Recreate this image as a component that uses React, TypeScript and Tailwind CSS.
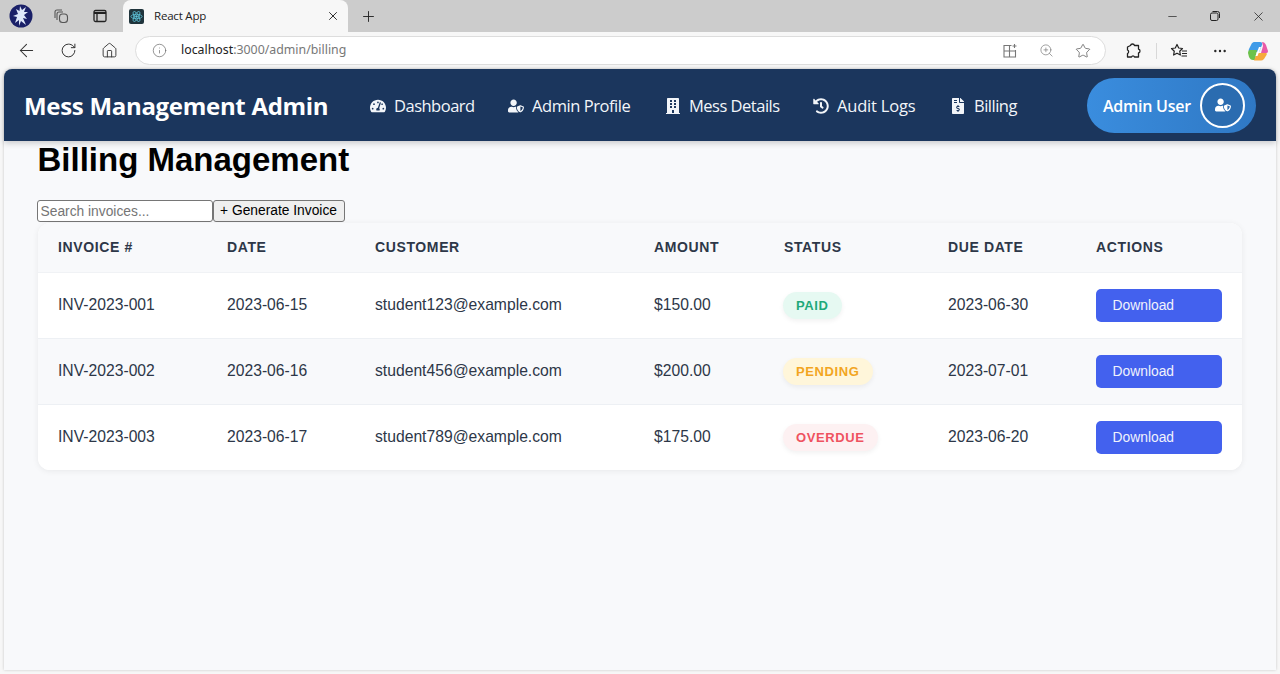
import React from "react";
import { FaTachometerAlt, FaUserShield, FaBuilding, FaHistory, FaFileInvoiceDollar } from "react-icons/fa";
import { ArrowLeft, RotateCw, Home, Info, Plus, X, Minus, ZoomIn, Star, MoreHorizontal } from "lucide-react";

const NAV = [
  { label: "Dashboard", icon: FaTachometerAlt, w: "w-[105px]", mr: "mr-[33px]", t: "tracking-[-0.5px]" },
  { label: "Admin Profile", icon: FaUserShield, w: "w-[125px]", mr: "mr-[32px]", t: "tracking-[-0.45px]" },
  { label: "Mess Details", icon: FaBuilding, w: "w-[116px]", mr: "mr-[32px]", t: "tracking-[-0.5px]" },
  { label: "Audit Logs", icon: FaHistory, w: "w-[104px]", mr: "mr-[33px]", t: "tracking-[-0.2px]" },
  { label: "Billing", icon: FaFileInvoiceDollar, w: "w-[68px]", mr: "", t: "tracking-[-0.5px]" },
];

const ROWS = [
  { id: "INV-2023-001", date: "2023-06-15", cust: "student123@example.com", amt: "$150.00", status: "PAID", due: "2023-06-30", bg: "bg-white", border: "border-b border-[#edf0f4]", badge: "bg-[#e6f9f2] text-[#1fa97a]" },
  { id: "INV-2023-002", date: "2023-06-16", cust: "student456@example.com", amt: "$200.00", status: "PENDING", due: "2023-07-01", bg: "bg-[#f8f9fb]", border: "border-b border-[#edf0f4]", badge: "bg-[#fff6da] text-[#f2a51f]" },
  { id: "INV-2023-003", date: "2023-06-17", cust: "student789@example.com", amt: "$175.00", status: "OVERDUE", due: "2023-06-20", bg: "bg-white", border: "", badge: "bg-[#fdf1f2] text-[#ef5360]" },
];

const HEAD = ["INVOICE #", "DATE", "CUSTOMER", "AMOUNT", "STATUS", "DUE DATE", "ACTIONS"];
const COLS = ["w-[169px]", "w-[148px]", "w-[279px]", "w-[130px]", "w-[164px]", "w-[148px]", "w-[166px]"];

function ReactFavicon() {
  return (
    <svg width="15" height="15" viewBox="0 0 15 15">
      <rect width="15" height="15" rx="2" fill="#20343c" />
      <g fill="none" stroke="#61c8de" strokeWidth="0.8">
        <ellipse cx="7.5" cy="7.5" rx="5.6" ry="2.2" />
        <ellipse cx="7.5" cy="7.5" rx="5.6" ry="2.2" transform="rotate(60 7.5 7.5)" />
        <ellipse cx="7.5" cy="7.5" rx="5.6" ry="2.2" transform="rotate(120 7.5 7.5)" />
      </g>
      <circle cx="7.5" cy="7.5" r="1.2" fill="#61c8de" />
    </svg>
  );
}

function ProfileLogo() {
  return (
    <svg width="24" height="24" viewBox="0 0 24 24">
      <circle cx="12" cy="12" r="11.5" fill="#1a2068" />
      <path d="M11 2 L13 6 L17 3 L15 8 L19 8 L15 11 L18 15 L14 14 L17 21 L12 17 L10 22 L10 16 L6 19 L8 13 L4 12 L9 10 L7 5 L10.5 7 Z" fill="#dfe8fa" />
    </svg>
  );
}

function TabsIcon() {
  return (
    <svg width="18" height="18" viewBox="0 0 18 18" fill="none" stroke="#555" strokeWidth="1.1">
      <path d="M3 11 V5 a2 2 0 0 1 2-2 h5" />
      <path d="M5 13 V7 a2 2 0 0 1 2-2 h4" />
      <rect x="7.5" y="7" width="8" height="8.5" rx="3" />
    </svg>
  );
}

function WindowIcon() {
  return (
    <svg width="16" height="16" viewBox="0 0 16 16" fill="none" stroke="#222" strokeWidth="1.3">
      <rect x="2" y="2.5" width="12" height="11" rx="1.5" />
      <path d="M2 5 H14" strokeWidth="2" />
      <path d="M5 5 V13" />
    </svg>
  );
}

function SplitIcon() {
  return (
    <svg width="16" height="16" viewBox="0 0 16 16" fill="none" stroke="#777" strokeWidth="1.1">
      <path d="M9.5 2.5 H2 V14 H13.5 V7" />
      <path d="M2 8 H13.5 M7.5 2.5 V14" />
      <path d="M12.5 1 V5 M10.5 3 H14.5" />
    </svg>
  );
}

function ExtensionIcon() {
  return (
    <svg width="18" height="18" viewBox="0 0 18 18" fill="none" stroke="#222" strokeWidth="1.3" strokeLinejoin="round">
      <path d="M6.5 3.5 C7 1.5 10 1.5 10.5 3.5 L14.5 3.5 L14.5 7 C16.5 7.5 16.5 10.5 14.5 11 L14.5 15 L10.5 15 C10 13.5 8 13.5 7.5 15 L3.5 15 L3.5 11.5 C5 11 5 8.5 3.5 8 L3.5 5 Z" />
    </svg>
  );
}

function FavIcon() {
  return (
    <svg width="18" height="18" viewBox="0 0 18 18" fill="none" stroke="#222" strokeWidth="1.2">
      <path d="M7 2.5 L8.7 6 L12.5 6.5 L9.7 9.2 L10.4 13 L7 11.2 L3.6 13 L4.3 9.2 L1.5 6.5 L5.3 6 Z" strokeLinejoin="round" />
      <path d="M12 9 H17 M12 11.5 H17 M11.5 14 H17" />
    </svg>
  );
}

function CopilotIcon() {
  return (
    <svg width="22" height="22" viewBox="0 0 22 22">
      <path d="M7 2 H13 C15 2 15.5 3 15 5 L12 12 H4 C2 12 1 11 2 9 L4.5 4 C5 3 6 2 7 2 Z" fill="#3f9be8" />
      <path d="M15 2 C17 2 18 3 19 5 L21 11 C21 13 20 13 18 13 H14 L16 6 Z" fill="#e85aa8" />
      <path d="M3 10 L10 10 L8 20 H6 C4 20 3 19 2 17 L1 13 C1 11 2 10 3 10 Z" fill="#6cc24a" />
      <path d="M10 13 H19 C20 13 20 14 19.5 15 L17 19 C16 20 15 20.5 14 20.5 H7 Z" fill="#f6a93b" />
      <path d="M12 7 L14 7 L10.5 16 L8.5 16 Z" fill="#ffffff" />
    </svg>
  );
}

function BrowserChrome() {
  return (
    <div className="shrink-0">
      <div className="h-8 bg-[#cccccc] flex items-center relative">
        <div className="w-[42px] flex justify-center"><ProfileLogo /></div>
        <div className="w-[38px] flex justify-center"><TabsIcon /></div>
        <div className="w-[40px] flex justify-center mr-[3px]"><WindowIcon /></div>
        <div className="w-[225px] h-[32px] bg-[#f7f7f7] rounded-t-[8px] flex items-center pl-[6px] pr-[8px] text-[11.5px] text-[#222] font-['Open_Sans',sans-serif]">
          <ReactFavicon />
          <span className="ml-[10px] tracking-[-0.2px]">React App</span>
          <X className="ml-auto" size={14} strokeWidth={1.6} color="#222" />
        </div>
        <div className="ml-[12px]"><Plus size={17} strokeWidth={1.3} color="#222" /></div>
        <div className="ml-auto flex items-center text-[#222]">
          <div className="w-[44px] flex justify-center"><Minus size={13} strokeWidth={1.3} /></div>
          <div className="w-[42px] flex justify-center"><svg width="12" height="12" viewBox="0 0 12 12" fill="none" stroke="#222" strokeWidth="1"><rect x="1.5" y="3" width="7.5" height="7.5" rx="1.5" /><path d="M3.5 1.5 H8.5 A2 2 0 0 1 10.5 3.5 V8" /></svg></div>
          <div className="w-[44px] flex justify-center"><X size={15} strokeWidth={1.2} /></div>
        </div>
      </div>
      <div className="h-[37px] bg-[#f7f7f7] flex items-center">
        <div className="w-[46px] flex justify-center ml-[3px]"><ArrowLeft size={21} strokeWidth={1.2} color="#333" /></div>
        <div className="w-[38px] flex justify-center"><RotateCw size={17} strokeWidth={1.4} color="#333" /></div>
        <div className="w-[44px] flex justify-center"><Home size={17} strokeWidth={1.3} color="#333" /></div>
        <div className="ml-[4px] w-[971px] h-[29px] bg-white rounded-full border border-[#dddddd] flex items-center pl-[16px] pr-[14px]">
          <Info size={15} strokeWidth={1.1} color="#666" />
          <span className="ml-[14px] text-[12.35px] text-[#222] font-['Noto_Sans',sans-serif]">localhost<span className="text-[#777]">:3000/admin/billing</span></span>
          <div className="ml-auto flex items-center gap-[21px]">
            <SplitIcon />
            <ZoomIn size={15} strokeWidth={1.1} color="#777" />
            <Star size={16} strokeWidth={1.1} color="#555" />
          </div>
        </div>
        <div className="ml-[17px] w-[20px] flex justify-center"><ExtensionIcon /></div>
        <div className="ml-[13px] w-[1px] h-[16px] bg-[#d8d8d8]" />
        <div className="ml-[12px] w-[20px] flex justify-center"><FavIcon /></div>
        <div className="ml-[21px] w-[20px] flex justify-center"><MoreHorizontal size={16} strokeWidth={1.6} color="#222" /></div>
        <div className="ml-[17px]"><CopilotIcon /></div>
      </div>
    </div>
  );
}

function Header() {
  return (
    <header className="h-[72px] bg-[#1b365d] rounded-t-[8px] flex items-center pl-[20px] pr-[20px] text-white font-['Open_Sans','Noto_Sans',sans-serif] shadow-[0_2px_6px_rgba(0,0,0,0.2)] relative z-10">
      <h1 className="text-[24px] font-bold w-[346px] tracking-[-0.3px] whitespace-nowrap pt-[2px]">Mess Management Admin</h1>
      <nav className="flex items-center pt-[2px]">
        {NAV.map(({ label, icon: Icon, w, mr, t }) => (
          <a key={label} className={`flex items-center text-[16.5px] text-[#f2f5f9] whitespace-nowrap ${t} ${w} ${mr}`}>
            <Icon className="mr-[8px] shrink-0" size={16} />
            {label}
          </a>
        ))}
      </nav>
      <div className="ml-auto w-[169px] h-[55px] rounded-full bg-gradient-to-r from-[#3a8dde] to-[#2f78c4] flex items-center pl-[16px] pr-[11px]">
        <span className="text-[16px] font-semibold tracking-[-0.25px] whitespace-nowrap pt-[2px]">Admin User</span>
        <div className="ml-auto w-[45px] h-[45px] rounded-full border-2 border-white bg-[#2b6cb0] flex items-center justify-center">
          <FaUserShield size={16} />
        </div>
      </div>
    </header>
  );
}

function Table() {
  return (
    <div className="w-[1204px] ml-[34px] rounded-[12px] bg-white overflow-hidden shadow-[0_1px_6px_rgba(0,0,0,0.07)]">
      <table className="w-full border-collapse table-fixed text-[15.7px] text-[#2d3748]">
        <thead>
          <tr className="h-[49px] bg-[#f8f9fb] border-b border-[#f0f2f5]">
            {HEAD.map((h, i) => (
              <th key={h} className={`${COLS[i]} pl-[20px] text-left text-[14px] font-bold tracking-[0.62px] text-[#2d3748]`}>{h}</th>
            ))}
          </tr>
        </thead>
        <tbody>
          {ROWS.map((r) => (
            <tr key={r.id} className={`h-[66px] ${r.bg} ${r.border}`}>
              <td className="pl-[20px]">{r.id}</td>
              <td className="pl-[20px]">{r.date}</td>
              <td className="pl-[20px]">{r.cust}</td>
              <td className="pl-[20px]">{r.amt}</td>
              <td className="pl-[19px]">
                <span className={`inline-block h-[27px] leading-[27px] px-[13px] rounded-full text-[13px] font-bold tracking-[0.62px] shadow-[0_2px_5px_rgba(0,0,0,0.06)] ${r.badge}`}>{r.status}</span>
              </td>
              <td className="pl-[20px]">{r.due}</td>
              <td className="pl-[20px]">
                <div className="w-[126px] h-[33px] leading-[33px] bg-[#4361ee] rounded-[5px] text-[#f0f2fc] text-[13.85px] pl-[16.5px]">Download</div>
              </td>
            </tr>
          ))}
        </tbody>
      </table>
    </div>
  );
}

export default function App() {
  return (
    <div className="w-[1280px] h-[674px] overflow-hidden flex flex-col bg-[#f7f7f7] font-['Liberation_Sans',Arial,sans-serif]">
      <BrowserChrome />
      <main className="mx-[4px] h-[601px] bg-[#f8f9fb] rounded-t-[8px] shadow-[0_0_3px_rgba(0,0,0,0.2)] flex flex-col">
        <Header />
        <h2 className="text-[33px] leading-[37px] font-bold text-black ml-[33.5px] h-[38px] whitespace-nowrap">Billing Management</h2>
        <div className="flex ml-[32.5px] mt-[21px] h-[22px] text-[13.8px]">
          <input placeholder="Search invoices..." className="w-[176px] h-[22px] px-[3px] bg-white border border-[#767676] rounded-[3px] placeholder:text-[#757575] outline-none" />
          <button className="h-[22px] w-[132px] bg-[#efefef] border border-[#767676] rounded-[3px] text-black">+ Generate Invoice</button>
        </div>
        <div className="mt-px"><Table /></div>
      </main>
    </div>
  );
}
